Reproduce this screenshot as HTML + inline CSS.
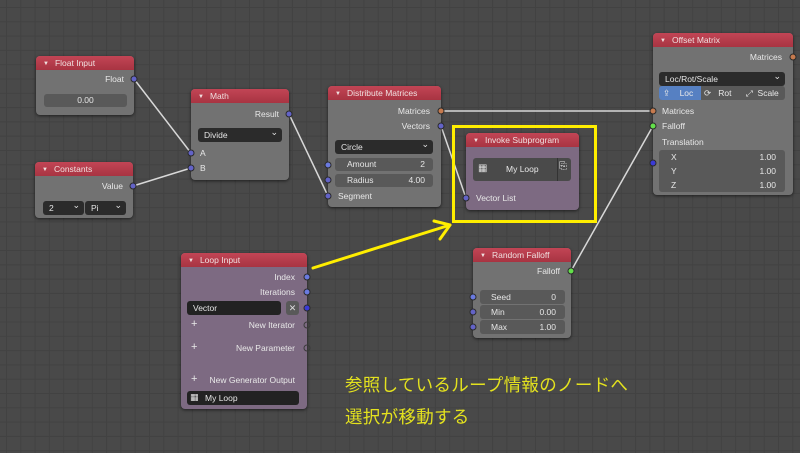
<!DOCTYPE html>
<html><head><meta charset="utf-8"><style>
*{box-sizing:border-box;margin:0;padding:0}
body{width:800px;height:453px;overflow:hidden;position:relative;font-family:"Liberation Sans","DejaVu Sans",sans-serif;font-size:9px;color:#e6e6e6;
background-color:#494949;
background-image:linear-gradient(to right,#424242 1px,transparent 1px),linear-gradient(to bottom,#424242 1px,transparent 1px);
background-size:14.3px 14.3px;background-position:6px 7px;}
.n{position:absolute;background:#727272;border-radius:4px;box-shadow:0 1px 3px rgba(0,0,0,.6);}
.n.p{background:#7d6a82}
.h{height:14px;background:linear-gradient(#c24555,#a83442);border-radius:4px 4px 0 0;padding-left:7px;line-height:14px;font-size:8.5px;color:#f0e0e0}
.h:before{content:"▼";font-size:6px;margin-right:6px;vertical-align:1px}
.a{position:absolute;font-size:8.5px;color:#e8e8e8;white-space:nowrap}
.r{text-align:right}
.dd{position:absolute;background:#2b2b2b;border-radius:3px;color:#e6e6e6;font-size:8.5px;padding-left:6px;line-height:14px;height:14px}
.dd:after{content:"⌄";position:absolute;right:4px;top:-3px;font-size:9px}
.dd.nc:after{content:""}
.f{position:absolute;background:#595959;border-radius:3px;color:#e6e6e6;font-size:8.5px;line-height:13px;height:13px}
.s{position:absolute;width:7px;height:7px;border-radius:50%;background:#6363c7;border:1px solid #2a2a2a;transform:translate(-50%,-50%)}
.o{background:#c67a4e}.g{background:#63e04a}.b{background:#3a3ad6}.lb{background:#6a7ae0}
.hol{background:transparent;border:1px solid #3a3a3a}
svg{position:absolute;left:0;top:0}
.jp{position:absolute;color:#e4e21e;font-family:"Liberation Sans","Noto Sans CJK JP",sans-serif;font-size:17.5px;white-space:nowrap;letter-spacing:0.3px}
</style></head><body>
<svg width="800" height="453">
<g fill="none" stroke="#d8d8d8" stroke-width="1.5">
<path d="M134,79 L191,153"/>
<path d="M133,186 L191,168"/>
<path d="M289,114 L328,196"/>
<path d="M441,111 L653,111"/>
<path d="M441,126 L466,198"/>
<path d="M571,271 L653,126"/>
</g>
</svg>

<div class="n" style="left:36px;top:56px;width:98px;height:59px"><div class="h">Float Input</div></div>
<div class="a r" style="left:60px;top:74px;width:64px">Float</div>
<div class="f" style="left:44px;top:94px;width:83px;text-align:center">0.00</div>

<div class="n" style="left:35px;top:162px;width:98px;height:56px"><div class="h">Constants</div></div>
<div class="a r" style="left:60px;top:181px;width:63px">Value</div>
<div class="dd" style="left:43px;top:201px;width:41px">2</div>
<div class="dd" style="left:85px;top:201px;width:41px">Pi</div>

<div class="n" style="left:191px;top:89px;width:98px;height:91px"><div class="h">Math</div></div>
<div class="a r" style="left:200px;top:109px;width:79px">Result</div>
<div class="dd" style="left:198px;top:128px;width:84px">Divide</div>
<div class="a" style="left:200px;top:148px">A</div>
<div class="a" style="left:200px;top:163px">B</div>

<div class="n" style="left:328px;top:86px;width:113px;height:121px"><div class="h">Distribute Matrices</div></div>
<div class="a r" style="left:340px;top:106px;width:90px">Matrices</div>
<div class="a r" style="left:340px;top:121px;width:90px">Vectors</div>
<div class="dd" style="left:335px;top:140px;width:98px">Circle</div>
<div class="f" style="left:335px;top:158px;width:98px;padding:0 8px 0 12px">Amount<span style="float:right">2</span></div>
<div class="f" style="left:335px;top:174px;width:98px;padding:0 8px 0 12px">Radius<span style="float:right">4.00</span></div>
<div class="a" style="left:338px;top:191px">Segment</div>

<div style="position:absolute;left:452px;top:125px;width:145px;height:98px;border:3px solid #ffee00"></div>
<div class="n p" style="left:466px;top:133px;width:113px;height:77px"><div class="h">Invoke Subprogram</div></div>
<div style="position:absolute;left:473px;top:158px;width:98px;height:23px;background:#4a4a4a;border-radius:3px"></div>
<div style="position:absolute;left:557px;top:158px;width:1px;height:23px;background:#333"></div>
<div class="a" style="left:478px;top:163px;font-size:10px;color:#ddd">▦</div>
<div class="a" style="left:506px;top:164px">My Loop</div>
<div class="a" style="left:559px;top:161px;font-size:10px">⎘</div>
<div class="a" style="left:476px;top:193px">Vector List</div>

<div class="n" style="left:653px;top:33px;width:140px;height:162px"><div class="h">Offset Matrix</div></div>
<div class="a r" style="left:700px;top:52px;width:82px">Matrices</div>
<div class="dd" style="left:659px;top:72px;width:126px">Loc/Rot/Scale</div>
<div style="position:absolute;left:659px;top:86px;width:126px;height:14px;background:#595959;border-radius:3px"></div>
<div style="position:absolute;left:659px;top:86px;width:42px;height:14px;background:#5680c2;border-radius:3px 0 0 3px"></div>
<div class="a" style="left:663px;top:88px">⇪&nbsp;&nbsp;&nbsp;&nbsp;Loc</div>
<div class="a" style="left:704px;top:88px">⟳&nbsp;&nbsp;&nbsp;Rot</div>
<div class="a" style="left:746px;top:88px">⤢&nbsp;&nbsp;Scale</div>
<div class="a" style="left:662px;top:106px">Matrices</div>
<div class="a" style="left:662px;top:121px">Falloff</div>
<div class="a" style="left:662px;top:137px">Translation</div>
<div style="position:absolute;left:659px;top:150px;width:126px;height:42px;background:#595959;border-radius:3px"></div>
<div class="a" style="left:671px;top:152px">X</div><div class="a r" style="left:720px;top:152px;width:56px">1.00</div>
<div class="a" style="left:671px;top:166px">Y</div><div class="a r" style="left:720px;top:166px;width:56px">1.00</div>
<div class="a" style="left:671px;top:180px">Z</div><div class="a r" style="left:720px;top:180px;width:56px">1.00</div>

<div class="n p" style="left:181px;top:253px;width:126px;height:156px"><div class="h">Loop Input</div></div>
<div class="a r" style="left:200px;top:272px;width:95px">Index</div>
<div class="a r" style="left:200px;top:287px;width:95px">Iterations</div>
<div class="dd nc" style="left:187px;top:301px;width:94px;background:#222">Vector</div>
<div style="position:absolute;left:286px;top:301px;width:13px;height:14px;background:#595959;border-radius:3px;color:#ddd;font-size:9px;text-align:center;line-height:14px">✕</div>
<div class="a" style="left:191px;top:318px;font-size:11px">+</div><div class="a r" style="left:200px;top:320px;width:95px">New Iterator</div>
<div class="a" style="left:191px;top:341px;font-size:11px">+</div><div class="a r" style="left:200px;top:343px;width:95px">New Parameter</div>
<div class="a" style="left:191px;top:373px;font-size:11px">+</div><div class="a r" style="left:200px;top:375px;width:95px">New Generator Output</div>
<div style="position:absolute;left:187px;top:391px;width:112px;height:14px;background:#222;border-radius:3px"></div>
<div class="a" style="left:190px;top:392px;font-size:9px">▦</div>
<div class="a" style="left:205px;top:393px">My Loop</div>

<div class="n" style="left:473px;top:248px;width:98px;height:90px"><div class="h">Random Falloff</div></div>
<div class="a r" style="left:490px;top:266px;width:70px">Falloff</div>
<div class="f" style="left:480px;top:290px;width:85px;height:14px;line-height:14px;padding:0 9px 0 11px">Seed<span style="float:right">0</span></div>
<div class="f" style="left:480px;top:305px;width:85px;height:14px;line-height:14px;padding:0 9px 0 11px">Min<span style="float:right">0.00</span></div>
<div class="f" style="left:480px;top:320px;width:85px;height:14px;line-height:14px;padding:0 9px 0 11px">Max<span style="float:right">1.00</span></div>

<div class="s" style="left:134px;top:79px"></div>
<div class="s" style="left:133px;top:186px"></div>
<div class="s" style="left:191px;top:153px"></div>
<div class="s" style="left:191px;top:168px"></div>
<div class="s" style="left:289px;top:114px"></div>
<div class="s o" style="left:441px;top:111px"></div>
<div class="s" style="left:441px;top:126px"></div>
<div class="s lb" style="left:328px;top:165px"></div>
<div class="s" style="left:328px;top:180px"></div>
<div class="s" style="left:328px;top:196px"></div>
<div class="s" style="left:466px;top:198px"></div>
<div class="s o" style="left:793px;top:57px"></div>
<div class="s o" style="left:653px;top:111px"></div>
<div class="s g" style="left:653px;top:126px"></div>
<div class="s b" style="left:653px;top:163px"></div>
<div class="s lb" style="left:307px;top:277px"></div>
<div class="s lb" style="left:307px;top:292px"></div>
<div class="s b" style="left:307px;top:308px"></div>
<div class="s hol" style="left:307px;top:325px"></div>
<div class="s hol" style="left:307px;top:348px"></div>
<div class="s g" style="left:571px;top:271px"></div>
<div class="s lb" style="left:473px;top:297px"></div>
<div class="s" style="left:473px;top:312px"></div>
<div class="s" style="left:473px;top:327px"></div>

<svg width="800" height="453" style="pointer-events:none">
<g stroke="#ffee00" stroke-width="3" fill="none" stroke-linecap="round" stroke-linejoin="round">
<path d="M313,268 L450,225"/>
<path d="M434,221 L450,225 L440,239"/>
</g>
</svg>

<div class="jp" style="left:345px;top:372px">参照しているループ情報のノードへ</div>
<div class="jp" style="left:345px;top:404px">選択が移動する</div>
</body></html>
